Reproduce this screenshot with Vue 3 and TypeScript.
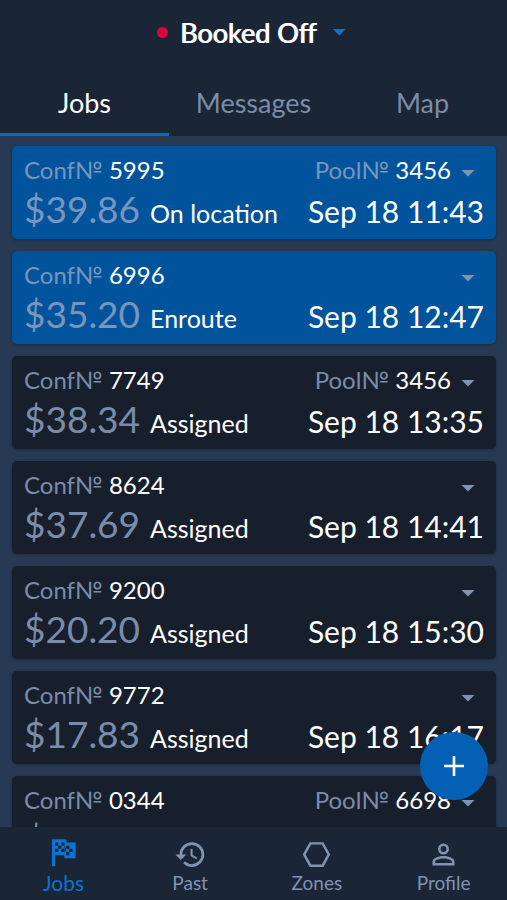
<script setup lang="ts">
import { ref } from 'vue'

interface Job {
  conf: string
  pool?: string
  price: string
  status?: string
  time?: string
  active?: boolean
}

const tabs: string[] = ['Jobs', 'Messages', 'Map']
const currentTab = ref('Jobs')

const jobs: Job[] = [
  { conf: '5995', pool: '3456', price: '$39.86', status: 'On location', time: 'Sep 18 11:43', active: true },
  { conf: '6996', price: '$35.20', status: 'Enroute', time: 'Sep 18 12:47', active: true },
  { conf: '7749', pool: '3456', price: '$38.34', status: 'Assigned', time: 'Sep 18 13:35' },
  { conf: '8624', price: '$37.69', status: 'Assigned', time: 'Sep 18 14:41' },
  { conf: '9200', price: '$20.20', status: 'Assigned', time: 'Sep 18 15:30' },
  { conf: '9772', price: '$17.83', status: 'Assigned', time: 'Sep 18 16:17' },
  { conf: '0344', pool: '6698', price: '$22.38' },
]

const pages = [
  {
    name: 'Jobs',
    icon: 'M14.4,6H20V16H13L12.6,14H7V21H5V4H14L14.4,6M14,14H16V12H18V10H16V8H14V10L13,8V6H11V8H9V6H7V8H9V10H7V12H9V10H11V12H13V10L14,12V14M11,10V8H13V10H11M14,10H16V12H14V10Z',
  },
  {
    name: 'Past',
    icon: 'M13.5,8H12V13L16.28,15.54L17,14.33L13.5,12.25V8M13,3A9,9 0 0,0 4,12H1L4.96,16.03L9,12H6A7,7 0 0,1 13,5A7,7 0 0,1 20,12A7,7 0 0,1 13,19C11.07,19 9.32,18.21 8.06,16.94L6.64,18.36C8.27,20 10.5,21 13,21A9,9 0 0,0 22,12A9,9 0 0,0 13,3',
  },
  {
    name: 'Zones',
    icon: 'M7,3H17L22,12L17,21H7L2,12L7,3M8.1,4.8L4.1,12L8.1,19.2H15.9L19.9,12L15.9,4.8H8.1Z',
  },
  {
    name: 'Profile',
    icon: 'M12,13C9.33,13 4,14.33 4,17V20H20V17C20,14.33 14.67,13 12,13M12,4A4,4 0 0,0 8,8A4,4 0 0,0 12,12A4,4 0 0,0 16,8A4,4 0 0,0 12,4M12,14.9C14.97,14.9 18.1,16.36 18.1,17V18.1H5.9V17C5.9,16.36 9,14.9 12,14.9M12,5.9A2.1,2.1 0 0,1 14.1,8A2.1,2.1 0 0,1 12,10.1A2.1,2.1 0 0,1 9.9,8A2.1,2.1 0 0,1 12,5.9Z',
  },
]
const currentPage = ref('Jobs')
</script>

<template>
  <div class="app">
    <header class="header">
      <button class="duty" type="button">
        <span class="dot"></span>
        <span>Booked Off</span>
        <span class="caret caret-blue"></span>
      </button>
      <nav class="tabs">
        <button
          v-for="tab in tabs"
          :key="tab"
          type="button"
          class="tab"
          :class="{ selected: tab === currentTab }"
          @click="currentTab = tab"
        >
          {{ tab }}
        </button>
      </nav>
    </header>

    <main class="content">
      <div class="list">
        <article v-for="job in jobs" :key="job.conf" class="card" :class="{ active: job.active }">
          <div class="row">
            <p class="field"><span class="muted">Conf№</span> {{ job.conf }}</p>
            <div class="pool">
              <p v-if="job.pool" class="field"><span class="muted">Pool№</span> {{ job.pool }}</p>
              <button class="more" type="button" aria-label="Expand"><span class="caret"></span></button>
            </div>
          </div>
          <div class="row details">
            <span class="price">{{ job.price }}</span>
            <span v-if="job.status" class="status">{{ job.status }}</span>
            <time v-if="job.time" class="time">{{ job.time }}</time>
          </div>
        </article>
      </div>
      <button class="add" type="button" aria-label="Add job">
        <svg viewBox="0 0 20 20" width="20" height="20" aria-hidden="true">
          <path d="M10 0V20M0 10H20" stroke="currentColor" stroke-width="2.6" />
        </svg>
      </button>
    </main>

    <nav class="bottom">
      <a
        v-for="page in pages"
        :key="page.name"
        href="#"
        class="page"
        :class="{ selected: page.name === currentPage }"
        @click.prevent="currentPage = page.name"
      >
        <svg class="icon" viewBox="0 0 24 24" aria-hidden="true">
          <path :d="page.icon" fill="currentColor" fill-rule="evenodd" />
        </svg>
        <span>{{ page.name }}</span>
      </a>
    </nav>
  </div>
</template>

<style>
body {
  margin: 0;
  background: #1a2535;
}
</style>

<style scoped>
.app {
  display: flex;
  flex-direction: column;
  height: 100vh;
  font-family: Lato, "Liberation Sans", sans-serif;
  color: #fff;
  background: #1a2535;
}

button {
  padding: 0;
  border: 0;
  background: none;
  color: inherit;
  font: inherit;
  cursor: pointer;
}

.header {
  display: flex;
  flex-direction: column;
}

.duty {
  display: flex;
  align-items: center;
  justify-content: center;
  gap: 12px;
  height: 64px;
  padding-right: 4px;
  font-size: 27px;
  text-shadow: 1px 0 currentColor;
}

.dot {
  width: 11px;
  height: 11px;
  border-radius: 50%;
  background: #d6083b;
}

.caret {
  display: block;
  width: 14px;
  height: 7px;
  background: #8093b0;
  clip-path: polygon(0 0, 100% 0, 50% 100%);
}

.caret-blue {
  margin-left: 4px;
  background: #0a74d1;
}

.tabs {
  display: grid;
  grid-template-columns: repeat(3, 1fr);
}

.tab {
  height: 72px;
  padding-top: 8px;
  border-bottom: 3px solid transparent;
  color: #7a8ca8;
  font-size: 27px;
}

.tab.selected {
  border-color: #0d68bd;
  color: #fff;
}

.content {
  position: relative;
  flex: 1;
  min-height: 0;
  background: #283a53;
}

.list {
  display: flex;
  flex-direction: column;
  gap: 12px;
  height: 100%;
  box-sizing: border-box;
  padding: 10px 11px 0 12px;
  overflow-y: auto;
  scrollbar-width: none;
}

.card {
  flex: none;
  height: 93px;
  box-sizing: border-box;
  padding: 8px 12px;
  border-radius: 5px;
  background: #181f2c;
  box-shadow: 0 1px 3px rgba(10, 18, 32, 0.4);
}

.card.active {
  background: #01539c;
}

.row {
  display: flex;
  align-items: center;
  justify-content: space-between;
}

.field {
  margin: 0;
  font-size: 24px;
  line-height: 32px;
}

.muted,
.price {
  color: #7a8ca8;
}

.active .muted,
.active .price {
  color: #7895bd;
}

.pool {
  display: flex;
  align-items: center;
}

.more {
  padding: 6px 9px 0 10px;
}

.details {
  align-items: baseline;
  gap: 10px;
  line-height: 46px;
}

.price {
  font-size: 37px;
}

.status {
  flex: 1;
  font-size: 25px;
}

.time {
  font-size: 30px;
}

.add {
  position: absolute;
  right: 19px;
  bottom: 27px;
  display: grid;
  place-items: center;
  width: 68px;
  height: 68px;
  border-radius: 50%;
  background: #0360b4;
}

.bottom {
  display: grid;
  grid-template-columns: repeat(4, 1fr);
  height: 73px;
}

.page {
  display: flex;
  flex-direction: column;
  align-items: center;
  justify-content: flex-end;
  padding-bottom: 5px;
  color: #8093b0;
  font-size: 19px;
  line-height: 24px;
  text-decoration: none;
}

.icon {
  width: 33px;
  height: 33px;
}

.page.selected {
  color: #0a74d1;
  font-size: 21px;
}

.page.selected .icon {
  width: 38px;
  height: 38px;
}
</style>
